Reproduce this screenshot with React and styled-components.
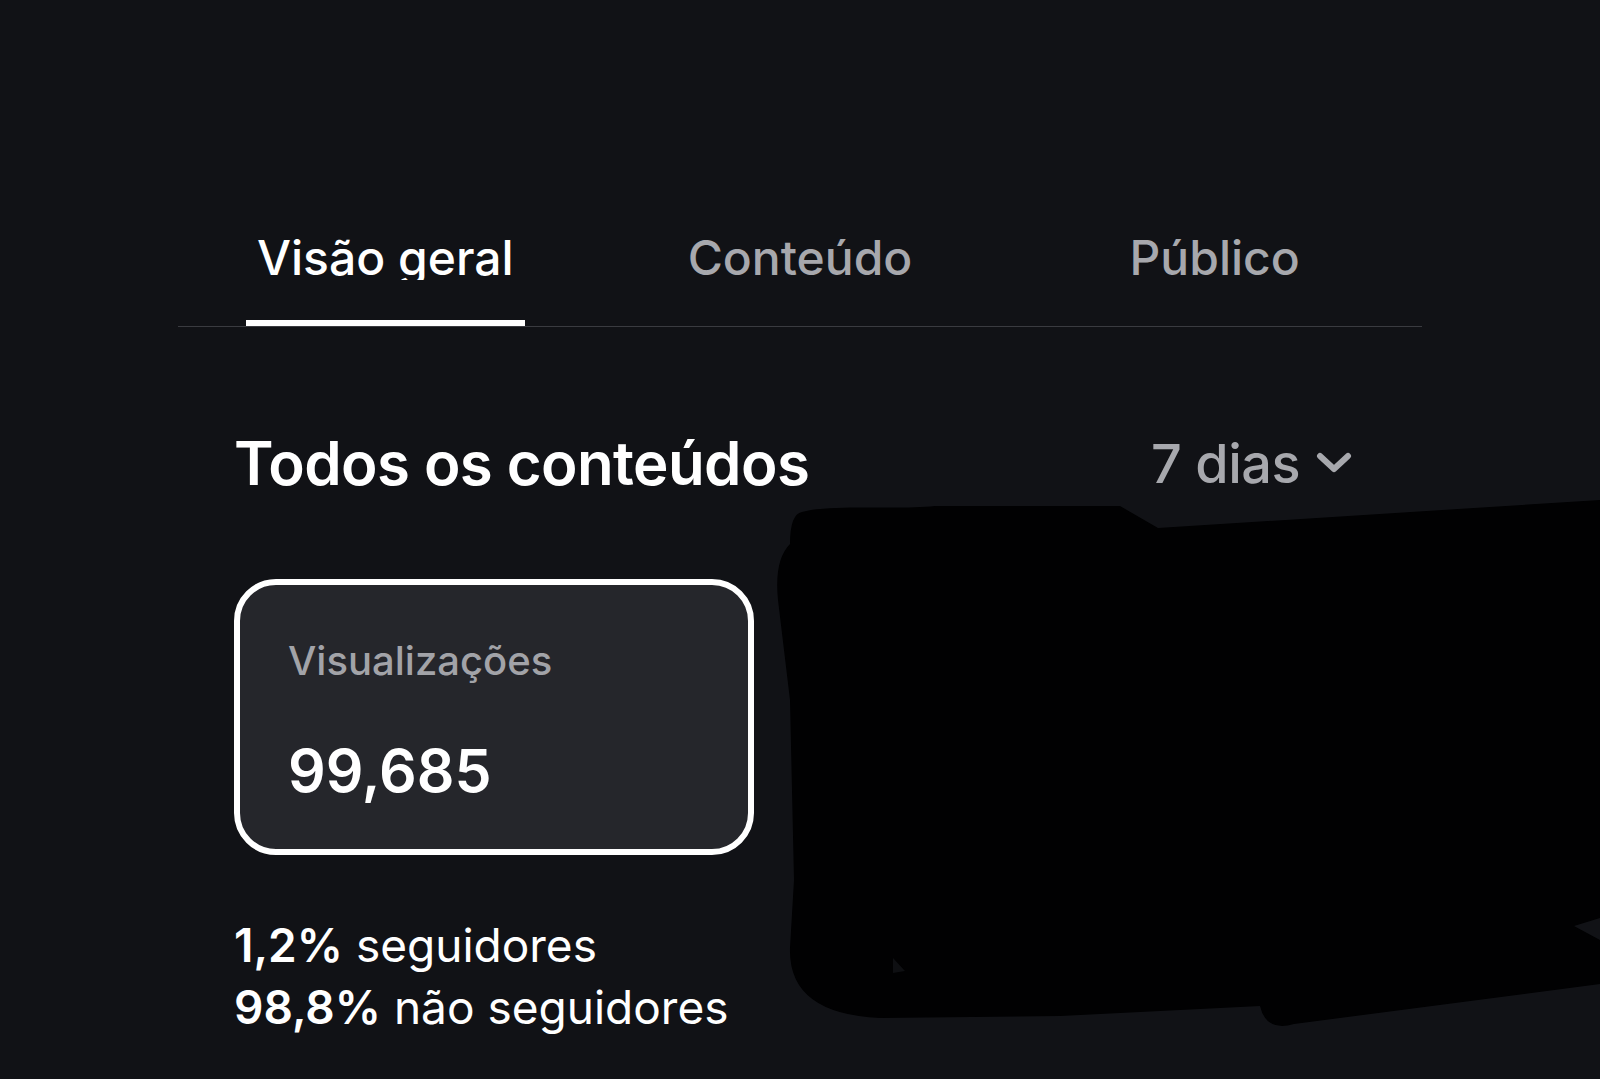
import styled, { createGlobalStyle } from 'styled-components';

const GlobalStyle = createGlobalStyle`
  html, body {
    margin: 0;
    padding: 0;
    background: #111216;
  }
  body {
    font-family: Inter, "Noto Sans", "Liberation Sans", sans-serif;
    color: #f4f4f5;
  }
`;

const Page = styled.div`
  position: relative;
  width: 1600px;
  min-height: 1079px;
  overflow: hidden;
  background: #111216;
`;

const TabBar = styled.nav`
  width: 1244px;
  margin: 0 auto;
  padding-top: 234px;
  display: grid;
  grid-template-columns: repeat(3, 1fr);
  justify-items: center;
  border-bottom: 1px solid #3a3b40;
`;

const Tab = styled.button`
  background: none;
  border: none;
  margin: 0;
  padding: 0 11px 40px;
  border-bottom: 6px solid ${(p) => (p.active ? '#ffffff' : 'transparent')};
  color: ${(p) => (p.active ? '#ffffff' : '#a7a8ad')};
  font-family: inherit;
  font-size: 48px;
  font-weight: 500;
  cursor: pointer;
`;

/* label is clipped just under the baseline, like the original */
const TabLabel = styled.span`
  display: block;
  height: 46px;
  line-height: 48px;
  overflow: hidden;
`;

const Section = styled.section`
  width: 1132px;
  margin: 100px 0 0 234px;
`;

const HeaderRow = styled.div`
  display: flex;
  align-items: center;
  justify-content: space-between;
  height: 72px;
`;

const Title = styled.h1`
  margin: 0;
  font-size: 60px;
  line-height: 72px;
  font-weight: 600;
  color: #ffffff;
  letter-spacing: -0.6px;
`;

const RangePicker = styled.button`
  display: flex;
  align-items: center;
  gap: 16px;
  margin-right: 14px;
  background: none;
  border: none;
  padding: 0;
  color: #a7a8ad;
  font-family: inherit;
  font-size: 54px;
  font-weight: 500;
  letter-spacing: -0.5px;
  cursor: pointer;
`;

const Card = styled.div`
  box-sizing: border-box;
  width: 520px;
  height: 276px;
  margin-top: 80px;
  padding: 52px 48px 0;
  border: 6px solid #ffffff;
  border-radius: 42px;
  background: #25262b;
`;

const CardLabel = styled.div`
  font-size: 40px;
  line-height: 48px;
  color: #a2a3a8;
  font-weight: 500;
`;

const CardValue = styled.div`
  margin-top: 50px;
  font-size: 59px;
  line-height: 71px;
  font-weight: 600;
  color: #ffffff;
`;

const Breakdown = styled.div`
  margin-top: 59px;
  font-size: 46px;
  line-height: 62px;
  color: #ffffff;
`;

const Line = styled.div`
  b {
    font-weight: 600;
  }
`;

const Redaction = styled.svg`
  position: absolute;
  top: 0;
  left: 0;
  pointer-events: none;
`;

const Chevron = () => (
  <svg width="36" height="22" viewBox="0 0 36 22">
    <polyline
      points="4,4 18,17 32,4"
      fill="none"
      stroke="#a7a8ad"
      strokeWidth="6"
      strokeLinecap="round"
      strokeLinejoin="round"
    />
  </svg>
);

const tabs = ['Visão geral', 'Conteúdo', 'Público'];

export default function App() {
  return (
    <>
      <GlobalStyle />
      <Page>
        <TabBar>
          {tabs.map((t, i) => (
            <Tab key={t} active={i === 0}>
              <TabLabel>{t}</TabLabel>
            </Tab>
          ))}
        </TabBar>

        <Section>
          <HeaderRow>
            <Title>Todos os conteúdos</Title>
            <RangePicker>
              7 dias
              <Chevron />
            </RangePicker>
          </HeaderRow>

          <Card>
            <CardLabel>Visualizações</CardLabel>
            <CardValue>99,685</CardValue>
          </Card>

          <Breakdown>
            <Line>
              <b>1,2%</b> seguidores
            </Line>
            <Line>
              <b>98,8%</b> não seguidores
            </Line>
          </Breakdown>
        </Section>

        {/* hand-drawn redaction scribble over the right side */}
        <Redaction width="1600" height="1079" viewBox="0 0 1600 1079">
          <path
            fill="#010102"
            d="M 802 512
               C 830 504, 900 510, 935 506
               L 1120 506
               L 1158 528
               L 1600 500
               L 1600 918
               L 1574 926
               L 1600 940
               L 1600 984
               L 1294 1024
               Q 1266 1032 1260 1006
               L 1060 1016
               L 880 1018
               Q 788 1014 790 948
               L 794 880
               L 790 700
               L 778 600
               Q 774 560 790 544
               Q 790 514 802 512 Z"
          />
          <polygon fill="#0e0f12" points="893,958 905,971 893,973" />
        </Redaction>
      </Page>
    </>
  );
}
